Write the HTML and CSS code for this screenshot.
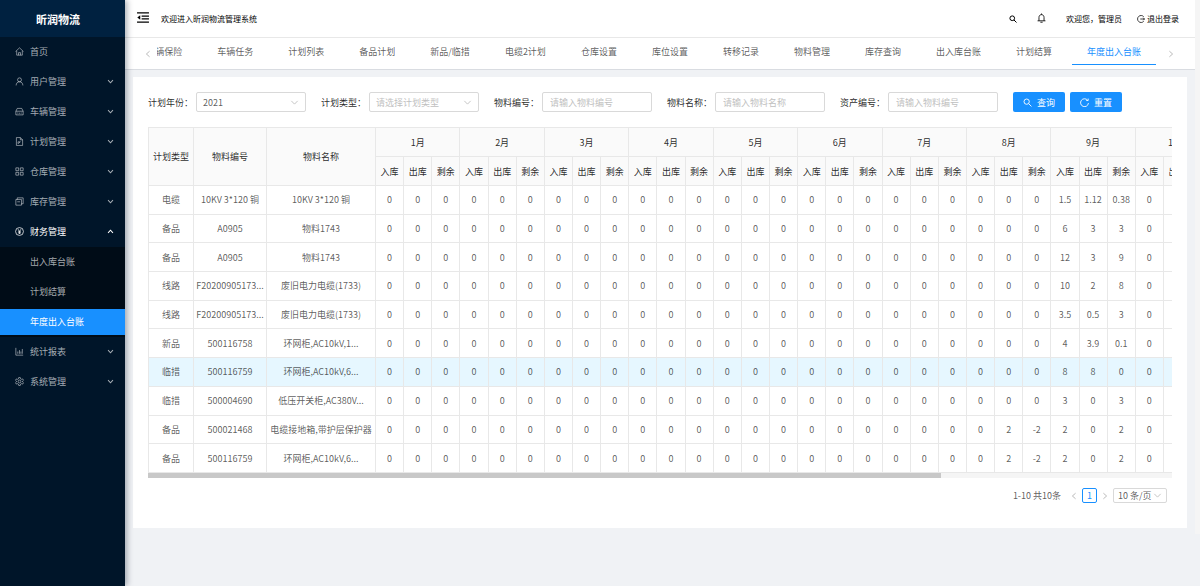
FILE: index.html
```html
<!DOCTYPE html>
<html lang="zh-CN">
<head>
<meta charset="utf-8">
<title>昕润物流</title>
<link rel="stylesheet" href="styles.css">
</head>
<body>
<svg class="sprite" aria-hidden="true">
  <symbol id="down" viewBox="0 0 10 10"><path d="M1.5 3.2 5 6.8l3.5-3.6"/></symbol>
  <symbol id="left" viewBox="0 0 10 10"><path d="M7 1.5 3 5l4 3.5"/></symbol>
  <symbol id="right" viewBox="0 0 10 10"><path d="M3 1.5 7 5 3 8.5"/></symbol>
  <symbol id="search" viewBox="0 0 16 16"><circle cx="6.5" cy="6.5" r="4.7"/><path d="m10 10 5 5"/></symbol>
</svg>
<div class="app">
  <aside class="sidebar">
    <h1 class="logo">昕润物流</h1>
    <nav>
      <ul class="menu">
        <li><a class="item" href="#"><svg class="icon" viewBox="0 0 16 16"><path d="M1 8 8 1.5 15 8M3 7v7.5h10V7M6.3 14.500V10h3.400v4.500"/></svg><span>首页</span></a></li>
        <li><a class="item" href="#"><svg class="icon" viewBox="0 0 16 16"><circle cx="8" cy="5" r="3.500"/><path d="M2 15c0-4 2.500-6.500 6-6.500s6 2.500 6 6.500"/></svg><span>用户管理</span><svg class="arrow"><use href="#down"/></svg></a></li>
        <li><a class="item" href="#"><svg class="icon" viewBox="0 0 16 16"><path d="M1.500 14V7.500L4 2.500h8l2.500 5V14zM1.500 7.500h13M4 10.700h1.500M10.500 10.700H12M6.500 11h3"/></svg><span>车辆管理</span><svg class="arrow"><use href="#down"/></svg></a></li>
        <li><a class="item" href="#"><svg class="icon" viewBox="0 0 16 16"><path d="M2.500 1h7l4 4v10h-11zM9.500 1v4h4M5.500 12V8.500h4M6 11.500l3.500-3"/></svg><span>计划管理</span><svg class="arrow"><use href="#down"/></svg></a></li>
        <li><a class="item" href="#"><svg class="icon" viewBox="0 0 16 16"><path d="M1.500 1.500h5v5h-5zM9.500 1.500h5v5h-5zM1.500 9.500h5v5h-5zM9.500 9.500h5v5h-5z"/></svg><span>仓库管理</span><svg class="arrow"><use href="#down"/></svg></a></li>
        <li><a class="item" href="#"><svg class="icon" viewBox="0 0 16 16"><path d="M1.500 4.500h10v10h-10zM4 4.500v-3h10.500V12h-3M4 8.500h5"/></svg><span>库存管理</span><svg class="arrow"><use href="#down"/></svg></a></li>
        <li>
          <a class="item open" href="#"><svg class="icon" viewBox="0 0 16 16"><circle cx="8" cy="8" r="7"/><path d="m5.500 4 2.500 4 2.500-4M8 8v4.500M5.500 8.500h5M5.500 10.500h5"/></svg><span>财务管理</span><svg class="arrow flip"><use href="#down"/></svg></a>
          <ul class="submenu">
            <li><a class="item" href="#">出入库台账</a></li>
            <li><a class="item" href="#">计划结算</a></li>
            <li><a class="item selected" href="#">年度出入台账</a></li>
          </ul>
        </li>
        <li><a class="item" href="#"><svg class="icon" viewBox="0 0 16 16"><path d="M1.500 1.500v13h13M5 12V8M8 12V5.500M10.500 12V8M13 12V3.500"/></svg><span>统计报表</span><svg class="arrow"><use href="#down"/></svg></a></li>
        <li><a class="item" href="#"><svg class="icon" viewBox="0 0 16 16"><path d="M6.600 1h2.800l.5 2.200 1.600.9 2.100-.7 1.400 2.500-1.600 1.500v1.200l1.600 1.500-1.400 2.500-2.100-.7-1.600.9-.5 2.200H6.600l-.5-2.200-1.600-.9-2.100.7L1 10.100l1.600-1.500V7.400L1 5.900l1.400-2.500 2.100.7 1.600-.9z"/><circle cx="8" cy="8" r="2.500"/></svg><span>系统管理</span><svg class="arrow"><use href="#down"/></svg></a></li>
      </ul>
    </nav>
  </aside>

  <div class="main">
    <header class="header">
      <button class="plain" aria-label="收起菜单"><svg class="fold" viewBox="0 0 13 12"><path d="M0 1h13M5 4.500h8M5 7.500h8M0 11h13"/><path class="solid" d="M3.500 3.500v5L.3 6z"/></svg></button>
      <span class="welcome">欢迎进入昕润物流管理系统</span>
      <button class="plain" aria-label="搜索"><svg class="find"><use href="#search"/></svg></button>
      <button class="plain bell" aria-label="通知"><svg viewBox="0 0 16 18"><path d="M1 14h14M3.500 14V8c0-3 2-5 4.500-5s4.500 2 4.500 5v6M8 3V1M6 16.500h4"/></svg></button>
      <span class="user">欢迎您，管理员</span>
      <a class="logout" href="#"><svg viewBox="0 0 16 16"><path d="M13.500 3.500A7 7 0 1 0 13.500 12.500M6.500 8H15M12.500 5.500 15 8l-2.500 2.500"/></svg>退出登录</a>
    </header>

    <nav class="tabbar">
      <button class="plain" aria-label="向左"><svg class="step"><use href="#left"/></svg></button>
      <div class="tabs">
        <a href="#">车辆保险</a><a href="#">车辆任务</a><a href="#">计划列表</a><a href="#">备品计划</a><a href="#">新品/临措</a><a href="#">电缆2计划</a><a href="#">仓库设置</a><a href="#">库位设置</a><a href="#">转移记录</a><a href="#">物料管理</a><a href="#">库存查询</a><a href="#">出入库台账</a><a href="#">计划结算</a><a class="current" href="#">年度出入台账</a>
      </div>
      <button class="plain" aria-label="向右"><svg class="step"><use href="#right"/></svg></button>
    </nav>

    <main class="card">
      <form class="filters">
        <div class="field"><label for="year">计划年份：</label><div class="picker"><select id="year"><option>2021</option></select><svg><use href="#down"/></svg></div></div>
        <div class="field"><label for="type">计划类型：</label><div class="picker empty"><select id="type"><option>请选择计划类型</option></select><svg><use href="#down"/></svg></div></div>
        <div class="field"><label for="code">物料编号：</label><input id="code" type="text" placeholder="请输入物料编号"></div>
        <div class="field"><label for="name">物料名称：</label><input id="name" type="text" placeholder="请输入物料名称"></div>
        <div class="field"><label for="asset">资产编号：</label><input id="asset" type="text" placeholder="请输入物料编号"></div>
        <div class="actions">
          <button class="primary" type="button"><svg><use href="#search"/></svg>查询</button>
          <button class="primary" type="button"><svg viewBox="0 0 16 16"><path d="M13.500 4A7 7 0 1 0 15 9M14.500 1v3.500H11"/></svg>重置</button>
        </div>
      </form>

      <div class="scroller">
        <table class="ledger">
          <colgroup><col class="c-type"><col class="c-code"><col class="c-name"><col span="39"></colgroup>
          <thead>
            <tr id="groups"><th rowspan="2">计划类型</th><th rowspan="2">物料编号</th><th rowspan="2">物料名称</th></tr>
            <tr id="units"></tr>
          </thead>
          <tbody id="rows"></tbody>
        </table>
      </div>
      <div class="track"><div class="thumb"></div></div>

      <div class="pager">
        <span class="total">1-10 共10条</span>
        <button class="plain" aria-label="上一页"><svg class="step"><use href="#left"/></svg></button>
        <button class="page">1</button>
        <button class="plain" aria-label="下一页"><svg class="step"><use href="#right"/></svg></button>
        <div class="picker small"><select aria-label="每页条数"><option>10 条/页</option></select><svg><use href="#down"/></svg></div>
      </div>
    </main>
  </div>
  <div class="rail"></div>
</div>
<script src="table.js"></script>
</body>
</html>
```
FILE: styles.css
```css
* { box-sizing: border-box; }
body {
  margin: 0;
  font: 9px/15px "Noto Sans CJK SC", sans-serif;
  color: rgba(0, 0, 0, .65);
  background: #f0f2f5;
}
ul { margin: 0; padding: 0; list-style: none; }
a { color: inherit; text-decoration: none; }
svg { fill: none; stroke: currentColor; stroke-width: 1.3; flex: none; display: block; }
button, input, select { font: inherit; color: inherit; margin: 0; }
.sprite { position: absolute; width: 0; height: 0; }
.plain { border: 0; padding: 0; background: none; }

.app { display: flex; min-height: 100vh; }

.sidebar {
  width: 125px;
  flex: none;
  position: relative;
  background: #001529;
  color: rgba(255, 255, 255, .65);
  box-shadow: 2px 0 6px rgba(0, 21, 41, .35);
}
.logo {
  margin: 0;
  padding-right: 9px;
  height: 37px;
  background: #002140;
  color: #fff;
  font-size: 11px;
  line-height: 39px;
  text-align: center;
}
.item {
  display: flex;
  align-items: center;
  height: 26px;
  margin: 2px 0;
  padding: 0 11px 1px 15px;
  gap: 6px;
}
.menu > li { display: flow-root; }
.icon { width: 9px; height: 9px; }
.arrow { width: 7px; height: 7px; margin-left: auto; stroke-width: 1.5; }
.flip { transform: rotate(180deg); }
.open { color: #fff; }
.submenu { display: flow-root; background: #000c17; }
.submenu li { display: flow-root; }
.submenu .item { padding-left: 30px; }
.submenu .selected { background: #1890ff; color: #fff; }

.main { flex: 1; min-width: 0; }
.rail { width: 5px; height: 534px; background: #f5f5f5; }

.header {
  display: flex;
  align-items: center;
  height: 38px;
  padding: 0 16px 0 12px;
  background: #fff;
  border-bottom: 1px solid #e8e8e8;
  color: #000;
  font-size: 8px;
}
.fold { width: 12px; height: 11px; margin-bottom: 3px; }
.fold .solid { fill: currentColor; stroke: none; }
.welcome { margin: 0 auto 0 12px; }
.find { width: 8px; height: 8px; stroke-width: 2; }
.bell { margin: 0 20px; }
.bell svg { width: 9px; height: 12px; stroke-width: 1.5; margin-bottom: 1px; }
.logout { display: flex; align-items: center; gap: 2px; margin-left: 15px; }
.logout svg { width: 8px; height: 8px; stroke-width: 1.5; }

.tabbar {
  display: flex;
  align-items: center;
  height: 32px;
  padding: 0 20px 0 19px;
  background: #fff;
  border-bottom: 1px solid #d9dce1;
}
.tabbar .plain { color: #aaa; }
.step { width: 8px; height: 8px; stroke-width: 1; }
.tabs {
  display: flex;
  flex: 1;
  min-width: 0;
  margin: 0 11px 0 5px;
  gap: 5px;
  justify-content: flex-end;
  align-self: flex-start;
  overflow: hidden;
}
.tabs a { flex: none; padding: 6px 15px 5px; border-bottom: 1px solid transparent; }
.tabs .current { color: #1890ff; border-color: #1890ff; }

.card { margin: 7px 8px 0; padding: 15px 15px 25px; background: #fff; }

.filters { display: flex; gap: 15px; }
.field { display: flex; align-items: center; height: 20px; }
.field label { width: 48px; white-space: nowrap; color: rgba(0, 0, 0, .85); }
.field input, .picker {
  width: 110px;
  height: 20px;
  border: 1px solid #d9d9d9;
  border-radius: 2px;
  background: #fff;
}
.field input { padding: 0 7px; }
.field input::placeholder { color: #bfbfbf; }
.picker { display: flex; align-items: center; padding: 0 6px; }
.picker select {
  appearance: none;
  flex: 1;
  min-width: 0;
  padding: 0;
  border: 0;
  background: none;
}
.picker svg { width: 9px; height: 9px; color: #bfbfbf; stroke-width: 1; }
.empty select { color: #bfbfbf; }
.actions { display: flex; gap: 5px; }
.primary {
  display: flex;
  align-items: center;
  justify-content: center;
  gap: 5px;
  width: 52px;
  height: 20px;
  padding: 0;
  border: 0;
  border-radius: 2px;
  background: #1890ff;
  color: #fff;
}
.primary svg { width: 9px; height: 9px; stroke-width: 1.6; }

.scroller { margin-top: 15px; overflow: hidden; border-left: 1px solid #e8e8e8; border-top: 1px solid #e8e8e8; }
.ledger {
  width: 1325px;
  height: 345px;
  table-layout: fixed;
  border-collapse: separate;
  border-spacing: 0;
  text-align: center;
}
.ledger thead tr { height: 29px; }
.c-type { width: 45px; }
.c-code { width: 73px; }
.c-name { width: 109px; }
.ledger th, .ledger td {
  padding: 0;
  border-right: 1px solid #e8e8e8;
  border-bottom: 1px solid #e8e8e8;
  white-space: nowrap;
}
.ledger th { background: #fafafa; color: rgba(0, 0, 0, .85); font-weight: 400; }
.ledger .hover td { background: #e6f7ff; }
.track { height: 5px; background: #f5f5f5; }
.thumb { width: 77.4%; height: 5px; background: #c8c8c8; }

.pager { display: flex; align-items: center; justify-content: flex-end; margin-top: 10px; padding-right: 5px; }
.pager .plain { color: #aaa; margin: 0 4px; }
.pager .plain:first-of-type { margin-left: 9px; }
.page {
  width: 15px;
  height: 15px;
  padding: 0;
  border: 1px solid #1890ff;
  border-radius: 2px;
  background: #fff;
  color: #1890ff;
  line-height: 13px;
}
.pager .small { width: 54px; height: 15px; padding: 0 4px; }
```
FILE: table.js
```js
const ZERO = '0 0 0';
const records = [
  ['电缆', '10KV 3*120 铜', '10KV 3*120 铜', { 9: '1.5 1.12 0.38' }],
  ['备品', 'A0905', '物料1743', { 9: '6 3 3' }],
  ['备品', 'A0905', '物料1743', { 9: '12 3 9' }],
  ['线路', 'F20200905173...', '废旧电力电缆(1733)', { 9: '10 2 8' }],
  ['线路', 'F20200905173...', '废旧电力电缆(1733)', { 9: '3.5 0.5 3' }],
  ['新品', '500116758', '环网柜,AC10kV,1...', { 9: '4 3.9 0.1' }],
  ['临措', '500116759', '环网柜,AC10kV,6...', { 9: '8 8 0' }],
  ['临措', '500004690', '低压开关柜,AC380V...', { 9: '3 0 3' }],
  ['备品', '500021468', '电缆接地箱,带护层保护器', { 8: '0 2 -2', 9: '2 0 2' }],
  ['备品', '500116759', '环网柜,AC10kV,6...', { 8: '0 2 -2', 9: '2 0 2' }]
];
const groups = Array.from({ length: 12 }, (_, i) => `${i + 1}月`).concat('合计');

document.getElementById('groups').insertAdjacentHTML('beforeend',
  groups.map(g => `<th colspan="3">${g}</th>`).join(''));
document.getElementById('units').innerHTML =
  groups.map(() => '<th>入库</th><th>出库</th><th>剩余</th>').join('');
document.getElementById('rows').innerHTML = records.map(([type, code, name, months], i) => {
  const numbers = groups.flatMap((_, m) => (months[m + 1] || ZERO).split(' '));
  const cells = [type, code, name, ...numbers].map(v => `<td>${v}</td>`).join('');
  return `<tr${i === 6 ? ' class="hover"' : ''}>${cells}</tr>`;
}).join('');
```
